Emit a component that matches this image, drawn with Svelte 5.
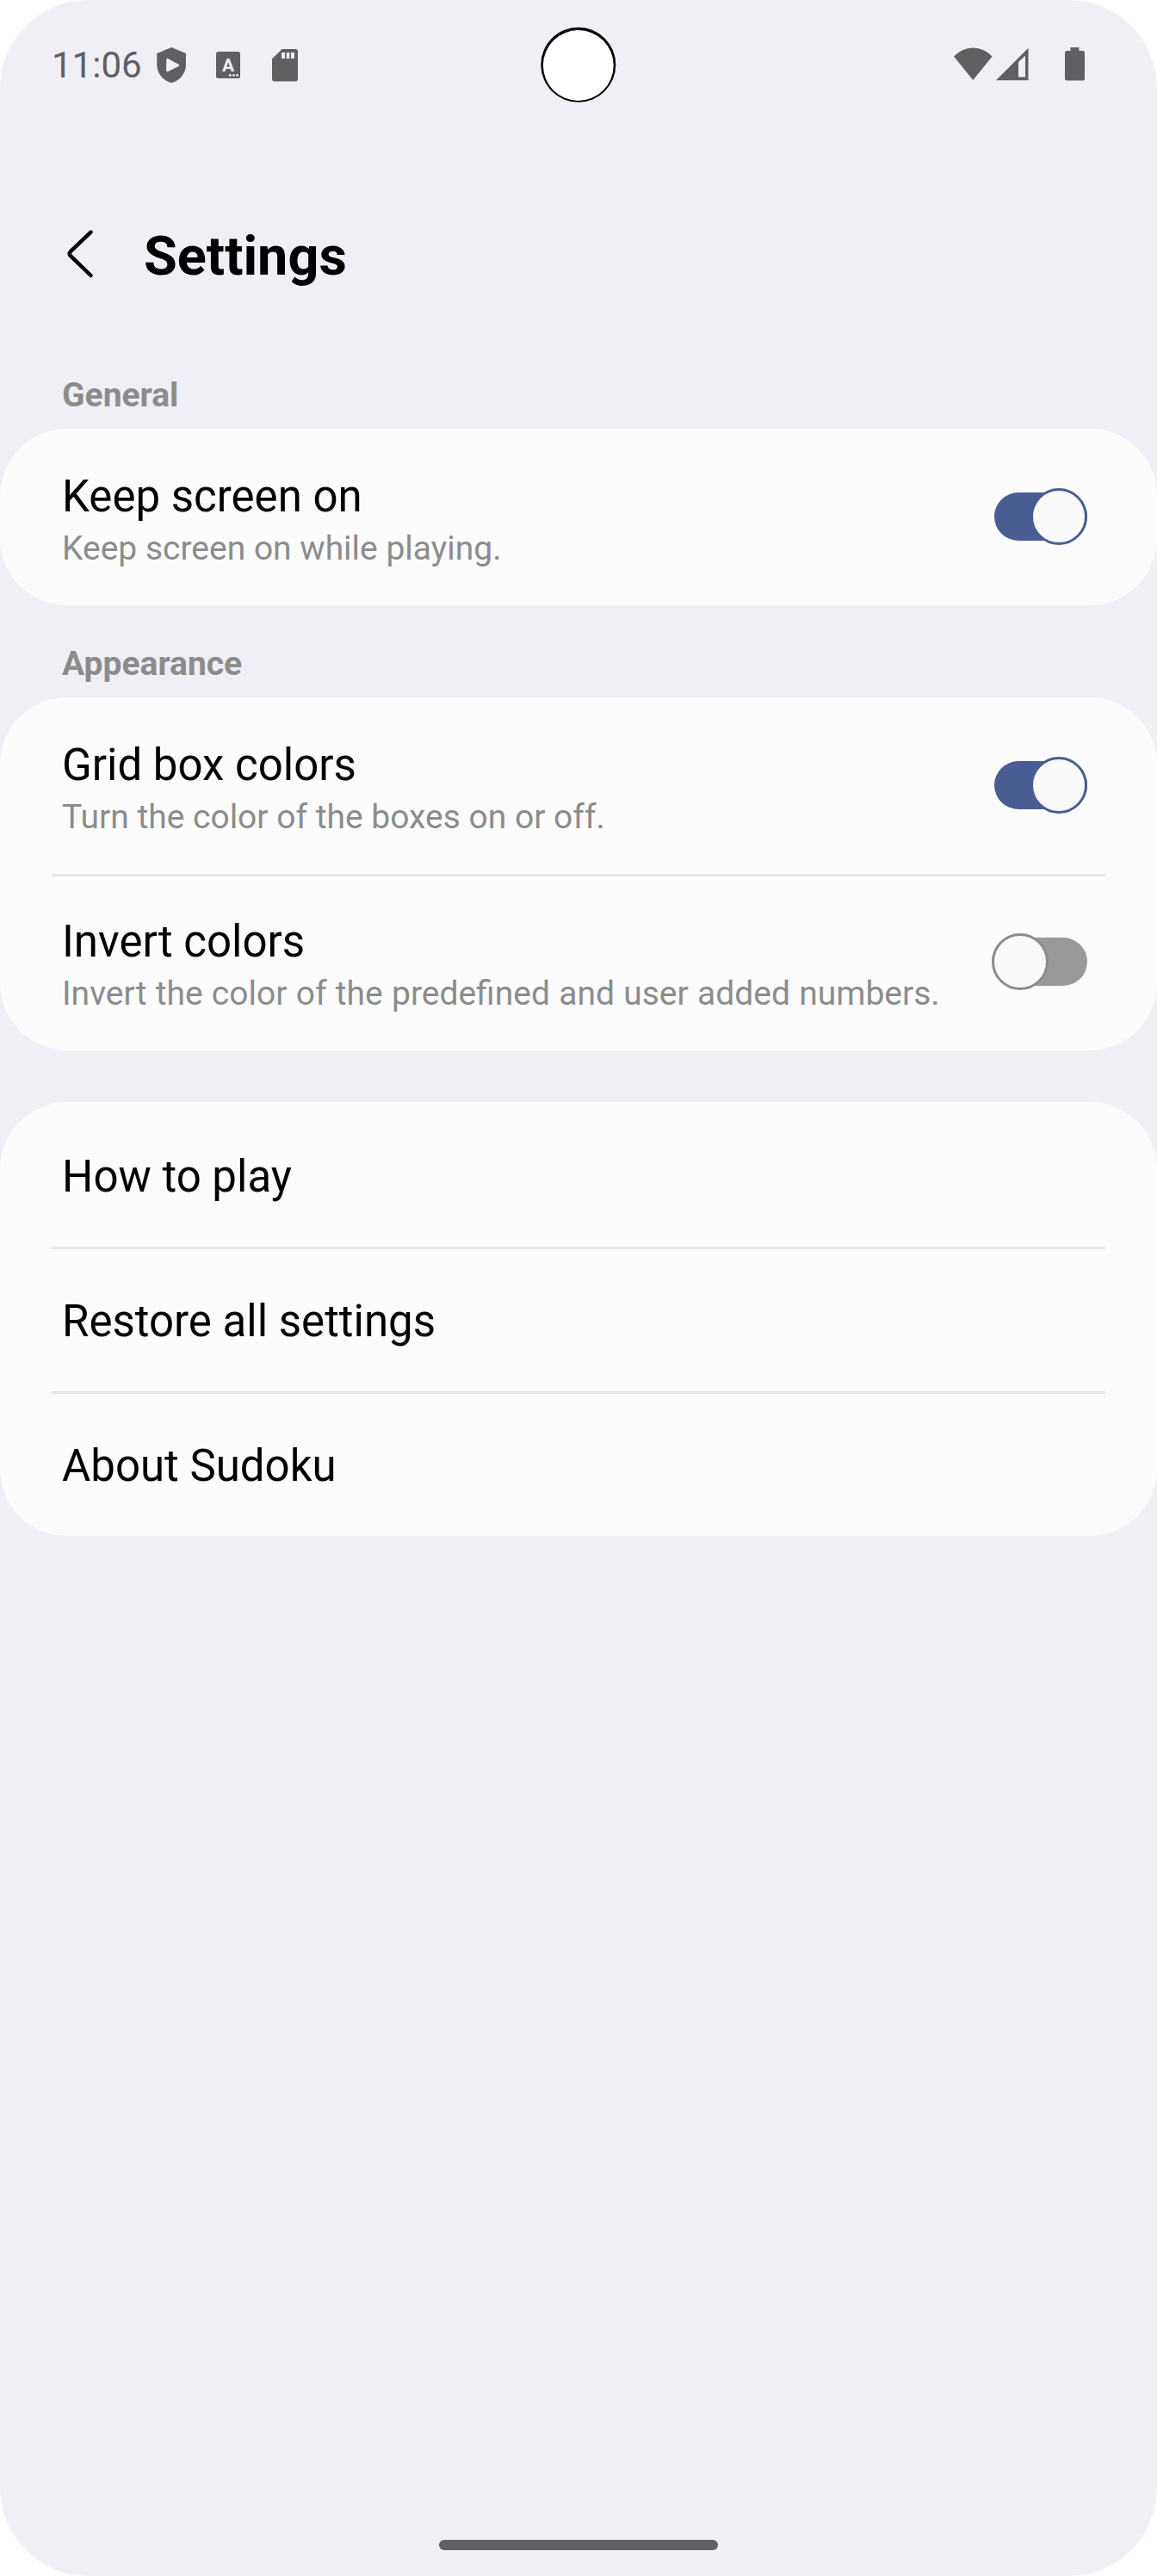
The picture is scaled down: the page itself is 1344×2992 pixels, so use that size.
<script>
  const groups = [
    {
      heading: 'General',
      items: [{ title: 'Keep screen on', summary: 'Keep screen on while playing.', on: true }]
    },
    {
      heading: 'Appearance',
      items: [
        { title: 'Grid box colors', summary: 'Turn the color of the boxes on or off.', on: true },
        { title: 'Invert colors', summary: 'Invert the color of the predefined and user added numbers.', on: false }
      ]
    }
  ];
  const links = ['How to play', 'Restore all settings', 'About Sudoku'];
</script>

<div class="screen">
  <header class="status">
    <span class="clock">11:06</span>
    <svg class="shield" width="35" height="42" viewBox="0 0 35 42">
      <path fill-rule="evenodd" d="M17.2 0 34 7V20C34 30 27 39 17.2 41.2 7.500 39 .3 30 .3 20V7Z M11.200 14.500V27Q11.200 29 13.300 28L25.600 22Q27.300 20.800 25.600 19.800L13.300 13.300Q11.200 12.500 11.200 14.500Z" />
    </svg>
    <svg class="letter" width="28" height="31" viewBox="0 0 28 31">
      <rect width="28" height="31" rx="2.500" />
      <text x="14" y="22.500">A</text>
      <circle class="dot" cx="16.300" cy="27.400" r="1.400" /><circle class="dot" cx="20.500" cy="27.400" r="1.400" /><circle class="dot" cx="24.600" cy="27.400" r="1.400" />
    </svg>
    <svg class="card-icon" width="30" height="38" viewBox="0 0 30 38">
      <path fill-rule="evenodd" d="M11.500 0H27Q30 0 30 3V34.500Q30 37.500 27 37.500H3Q0 37.500 0 34.500V11.500Z M11 4V11H15V4Z M16.700 4V11H20.300V4Z M22 4V11H26V4Z" />
    </svg>
    <svg class="wifi" width="45" height="38" viewBox="0 0 45 38">
      <path d="M0 10.500A30 30 0 0 1 44.600 10.500L22.300 38Z" />
    </svg>
    <svg class="signal" width="38" height="39" viewBox="0 0 38 39">
      <path fill-rule="evenodd" d="M37.500 .8V38.300H0Z M34 9.800 26 17V34.500H34Z" />
    </svg>
    <svg class="battery" width="23" height="39" viewBox="0 0 23 39">
      <path d="M6.500 0H16.500V4H20.500Q23 4 23 6.500V36Q23 38.500 20.500 38.500H2.500Q0 38.500 0 36V6.500Q0 4 2.500 4H6.500Z" />
    </svg>
  </header>
  <svg class="camera" width="88" height="88" viewBox="0 0 88 88">
    <circle cx="43.800" cy="44.200" r="43.500" />
    <circle class="lens" cx="43.800" cy="45" r="40.900" />
  </svg>

  <div class="toolbar">
    <svg class="back" width="32" height="56" viewBox="0 0 32 56">
      <path d="M28.500 2.600 4.900 25.200Q2.600 27.700 4.900 30.200L28.500 53" />
    </svg>
    <h1>Settings</h1>
  </div>

  <main>
    {#each groups as group}
      <h2>{group.heading}</h2>
      <section>
        {#each group.items as item}
          <div class="row">
            <div class="text">
              <div class="title">{item.title}</div>
              <div class="summary" class:long={item.summary.length > 50}>{item.summary}</div>
            </div>
            <div class="switch" class:on={item.on}><span class="thumb"></span></div>
          </div>
        {/each}
      </section>
    {/each}
    <section class="links">
      {#each links as link}
        <div class="row link"><div class="title">{link}</div></div>
      {/each}
    </section>
  </main>

  <footer><div class="handle"></div></footer>
</div>

<style>
  :global(body) {
    margin: 0;
    background: #fff;
  }
  .screen {
    position: relative;
    display: flex;
    flex-direction: column;
    width: 1344px;
    height: 2992px;
    box-sizing: border-box;
    overflow: hidden;
    border-radius: 103px;
    background: #f0eff6;
    font-family: Roboto, 'Liberation Sans', sans-serif;
    color: #000;
  }
  .status {
    display: flex;
    align-items: flex-start;
    height: 150px;
    padding: 55px 84px 0 60px;
    box-sizing: border-box;
    fill: #606062;
    color: #606062;
  }
  .status svg {
    flex: none;
  }
  .clock {
    width: 122px;
    margin-top: -3px;
    font-size: 42px;
    line-height: 48px;
    white-space: nowrap;
  }
  .letter {
    margin: 5px 0 0 34px;
  }
  .letter text {
    fill: #f0eff6;
    font-size: 21px;
    font-weight: 700;
    text-anchor: middle;
  }
  .dot {
    fill: #f0eff6;
  }
  .card-icon {
    margin: 2px 0 0 37px;
  }
  .wifi {
    margin-left: auto;
  }
  .signal {
    margin: 0 42px 0 4px;
  }
  .camera {
    position: absolute;
    top: 31px;
    left: 628px;
  }
  .lens {
    fill: #fff;
  }
  .toolbar {
    display: flex;
    align-items: flex-start;
    height: 241px;
    padding-left: 77px;
    box-sizing: border-box;
  }
  .back {
    margin-top: 117px;
    fill: none;
    stroke: #000;
    stroke-width: 4.5;
    stroke-linecap: round;
    stroke-linejoin: round;
  }
  h1 {
    margin: 111px 0 0 58px;
    font-size: 63px;
    line-height: 74px;
    font-weight: 700;
  }
  h2 {
    height: 107px;
    margin: 0;
    padding: 45px 72px 0;
    box-sizing: border-box;
    font-size: 39px;
    line-height: 46px;
    font-weight: 700;
    color: #8c8c8c;
  }
  section {
    border-radius: 78px;
    background: #fcfcfc;
  }
  .links {
    margin-top: 60px;
  }
  .row {
    position: relative;
    display: flex;
    justify-content: space-between;
    height: 205px;
    padding: 49px 81px 0 72px;
    box-sizing: border-box;
  }
  .row + .row::before {
    content: '';
    position: absolute;
    top: 0;
    left: 60px;
    right: 60px;
    height: 3px;
    background: #e8e8e8;
  }
  .link {
    height: 168px;
    padding-top: 57px;
  }
  .title {
    font-size: 51px;
    line-height: 60px;
    white-space: nowrap;
  }
  .summary {
    margin-top: 7px;
    font-size: 39px;
    line-height: 46px;
    color: #8c8c8c;
    white-space: nowrap;
  }
  .long {
    word-spacing: 0.6px;
  }
  .switch {
    display: flex;
    align-items: center;
    flex: none;
    width: 108px;
    height: 56px;
    margin-top: 25px;
    border-radius: 28px;
    background: #999;
  }
  .thumb {
    flex: none;
    width: 66px;
    height: 66px;
    margin-left: -3px;
    box-sizing: border-box;
    border: 3px solid #8c8c8c;
    border-radius: 50%;
    background: #fafafa;
  }
  .switch.on {
    background: #4a5d92;
  }
  .on .thumb {
    margin-left: 42px;
    border-color: #4a5d92;
  }
  footer {
    display: flex;
    justify-content: center;
    margin-top: auto;
    padding-bottom: 30px;
  }
  .handle {
    width: 324px;
    height: 12px;
    border-radius: 6px;
    background: #606062;
  }
</style>
